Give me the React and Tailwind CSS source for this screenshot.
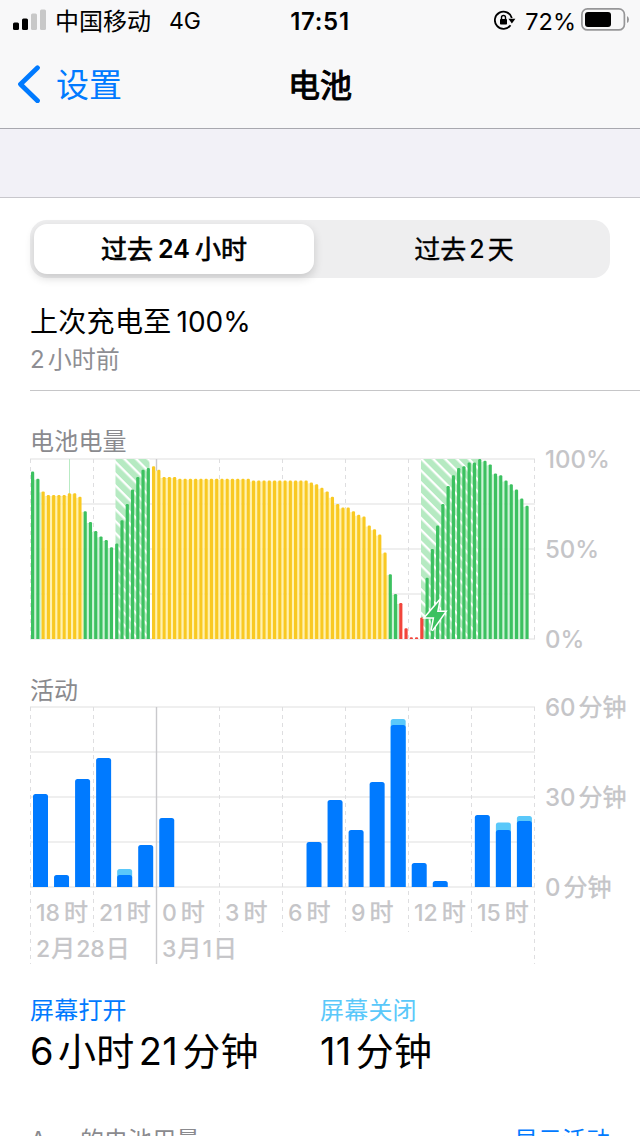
import React from 'react';

const levels = [
  93, 89, 82, 80, 80, 80, 80, 81, 81, 79, 71, 65, 60, 57, 55, 51,
  53, 66, 75, 83, 90, 94, 95, 96, 94, 90, 90, 90, 89, 89, 89, 89,
  89, 89, 89, 89, 89, 89, 89, 89, 89, 89, 88, 88, 88, 88, 88, 88,
  88, 88, 88, 88, 88, 87, 86, 84, 82, 79, 75, 73, 73, 71, 69, 68,
  63, 61, 58, 48, 36, 25, 20, 6, 1, 1, 12, 34, 50, 63, 75, 85,
  91, 95, 96, 98, 98, 100, 99, 97, 92, 91, 88, 86, 83, 78, 74,
];

const GREEN = { bar: '#3cc160', gap: '#cdf3d6' };
const YELLOW = { bar: '#f9c922', gap: '#fff2b0' };
const RED = { bar: '#f2453b', gap: '#ffffff' };

function levelColor(i) {
  if ((i >= 2 && i <= 9) || (i >= 23 && i <= 67)) return YELLOW;
  if (i >= 70 && i <= 74) return RED;
  return GREEN;
}

// minutes per hour slot: [screen on, total]
const activity = [
  [31, 31], [4, 4], [36, 36], [43, 43], [4, 6], [14, 14], [23, 23], [0, 0],
  [0, 0], [0, 0], [0, 0], [0, 0], [0, 0], [15, 15], [29, 29], [19, 19],
  [35, 35], [54, 56], [8, 8], [2, 2], [0, 0], [24, 24], [19, 21.5], [22, 23.7],
];

const hours = ['18', '21', '0', '3', '6', '9', '12', '15'];

function barPath(x, y, w, bottom, r) {
  const k = Math.min(r, bottom - y);
  return `M${x} ${bottom}V${y + k}q0 ${-k} ${k} ${-k}h${w - 2 * k}q${k} 0 ${k} ${k}V${bottom}z`;
}

// Chinese part of a medium-weight label
function Cn({ children }) {
  return <span className="font-normal [-webkit-text-stroke:0.4px_currentColor]">{children}</span>;
}

function Grid({ shortEnd, longEnd }) {
  return (
    <g>
      {[0, 45, 90, 135, 180].map((y) => (
        <rect key={y} x="0" y={y + 0.2} width="505" height="1.6" fill="#ebebec" />
      ))}
      {[0, 1, 3, 4, 5, 6, 7, 8].map((n) => (
        <line
          key={n}
          x1={n * 63 + 0.5}
          x2={n * 63 + 0.5}
          y1="1"
          y2={n === 0 || n === 8 ? longEnd : shortEnd}
          stroke="#dedee0"
          strokeDasharray="4 4"
        />
      ))}
      <rect x="125.8" y="1" width="1.4" height={longEnd - 1} fill="#c9c9cc" />
    </g>
  );
}

function BatteryChart() {
  return (
    <svg width="505" height="182" viewBox="0 0 505 182" className="block">
      <defs>
        <pattern id="hatch" width="8.4" height="8.4" patternUnits="userSpaceOnUse" patternTransform="rotate(45)">
          <rect width="8.4" height="8.4" fill="#b6eac2" />
          <rect width="8.4" height="2.3" fill="#fff" />
        </pattern>
      </defs>
      <Grid shortEnd={181} longEnd={181} />
      <rect x="39" y="1" width="1" height="180" fill="#b9ebc4" />
      {levels.map((v, i) => {
        if ((i >= 15 && i <= 22) || (i >= 74 && i <= 84) || i === 94) return null;
        const next = Math.min(v, levels[i + 1]);
        return (
          <rect key={i} x={4 + i * 5.26} y={182 - next * 1.8} width="2.26" height={next * 1.8 - 1} fill={levelColor(i).gap} />
        );
      })}
      <rect x="85.5" y="1" width="34" height="180" fill="url(#hatch)" />
      <rect x="391" y="1" width="57" height="180" fill="url(#hatch)" />
      {levels.map((v, i) => (
        <path key={i} d={barPath(1 + i * 5.26, 181 - v * 1.8, 3.2, 181, 1.2)} fill={levelColor(i).bar} />
      ))}
      <path
        d="M409 143.5L395.5 159.2H404.3L401.8 172.5L414.8 154H407z"
        fill="#3cc160"
        stroke="#fff"
        strokeWidth="3"
        paintOrder="stroke"
      />
    </svg>
  );
}

function ActivityChart() {
  return (
    <svg width="505" height="258" viewBox="0 0 505 258" className="col-start-1 row-start-1 block">
      <Grid shortEnd={226} longEnd={258} />
      {activity.map(([on, total], i) => {
        const x = 3 + i * 21.04;
        return (
          <g key={i}>
            {total > on && <path d={barPath(x, 181 - total * 3, 15, 181, 2.5)} fill="#5ac8fa" />}
            {on > 0 && <path d={barPath(x, 181 - on * 3, 15, 181, 2.5)} fill="#007aff" />}
          </g>
        );
      })}
    </svg>
  );
}

function StatusBar() {
  return (
    <div className="grid h-10 grid-cols-3 items-center text-2xl">
      <div className="flex items-center pl-[13px]">
        <svg width="33" height="22" viewBox="0 0 33 22">
          <rect x="0" y="13.5" width="6" height="7.5" rx="1.5" />
          <rect x="9" y="9.5" width="6" height="11.5" rx="1.5" />
          <rect x="18" y="4.5" width="6" height="16.5" rx="1.5" fill="#c8c8c8" />
          <rect x="27" y="0.5" width="6" height="20.5" rx="1.5" fill="#c8c8c8" />
        </svg>
        <span className="ml-[9px] whitespace-nowrap pt-[3px]">中国移动</span>
        <span className="ml-[18px] pt-[3px] text-[23px]">4G</span>
      </div>
      <div className="pt-[3px] text-center font-semibold tracking-[0.7px]">17:51</div>
      <div className="flex items-center justify-end pr-[11px]">
        <svg width="22" height="20" viewBox="0 0 22 20" fill="none" stroke="#000" strokeWidth="1.8">
          <path d="M17.8 8A8.6 8.6 0 1 0 16.5 15.2" />
          <path d="M14.4 8.8h7l-3.5 4.6z" fill="#000" stroke="none" />
          <rect x="6" y="9" width="7" height="5.5" rx="0.8" fill="#000" stroke="none" />
          <path d="M7.5 9.5V7.5a2 2 0 0 1 4 0v2" strokeWidth="1.4" />
        </svg>
        <span className="ml-[9px] mr-[5px] pt-[3px] text-[23.5px]">72%</span>
        <svg width="48" height="24" viewBox="0 0 48 24">
          <rect x="0.9" y="0.9" width="42.5" height="21" rx="5.5" fill="none" stroke="#969698" strokeWidth="1.7" />
          <rect x="4" y="4" width="26" height="15" rx="3" />
          <path d="M46 8q2 1 2 3.5t-2 3.5z" fill="#969698" />
        </svg>
      </div>
    </div>
  );
}

export default function App() {
  return (
    <div className="flex h-[1136px] w-[640px] flex-col overflow-hidden bg-white font-['Inter','Noto_Sans_CJK_SC',sans-serif] text-black">
      <header className="h-[129px] shrink-0 border-b border-[#a8a8af] bg-[#f8f8f9]">
        <StatusBar />
        <div className="grid h-[88px] grid-cols-3 items-center text-[33px]">
          <button type="button" className="flex items-center pl-[17px] text-[#007aff]">
            <svg width="24" height="38" viewBox="0 0 24 38" fill="none" stroke="currentColor" strokeWidth="4.8" strokeLinecap="round" strokeLinejoin="round">
              <path d="M20.5 2.8L3.5 19.2L20.5 35.8" />
            </svg>
            <span className="ml-[15px] pt-[3px]">设置</span>
          </button>
          <h1 className="pt-[3px] text-center text-[32px] font-normal [-webkit-text-stroke:1px_currentColor]">电池</h1>
        </div>
      </header>
      <div className="h-[69px] shrink-0 border-b border-[#c8c7cc] bg-[#f2f1f7]" />

      <main className="flex flex-col pl-[30px]">
        <div className="mt-[22px] grid h-[58px] w-[580px] grid-cols-2 rounded-[17px] bg-[#eeeeef] p-1 text-[26px]">
          <button type="button" className="mr-[6px] flex items-center justify-center gap-[5px] rounded-[13px] bg-white pt-px font-semibold shadow-[0_4px_10px_rgba(0,0,0,0.16)]">
            <span className="font-normal [-webkit-text-stroke:0.7px_currentColor]">过去</span>
            <span className="text-[25px]">24</span>
            <span className="font-normal [-webkit-text-stroke:0.7px_currentColor]">小时</span>
          </button>
          <button type="button" className="flex items-center justify-center gap-[3px] pl-[2px] pt-px font-medium">
            <Cn>过去</Cn><span className="text-[25px]">2</span><Cn>天</Cn>
          </button>
        </div>

        <section className="h-[113px] border-b border-[#c6c6c8] pt-[24px]">
          <p className="flex h-10 items-center gap-[5px] text-[28px]"><span className="tracking-[0.3px]">上次充电至</span><span>100%</span></p>
          <p className="flex h-[34px] items-center gap-[3px] pt-px text-2xl text-[#8e8e93]"><span>2</span><span>小时前</span></p>
        </section>

        <section className="mt-[34px]">
          <h2 className="flex h-[33px] items-center pt-px text-2xl tracking-[0.2px] text-[#8a8a8e]">电池电量</h2>
          <div className="flex h-[182px]">
            <BatteryChart />
            <div className="-mb-[14px] -mt-[12px] ml-[10px] flex flex-col justify-between text-2xl font-medium leading-[28px] text-[#c5c5c8]">
              <span>100%</span>
              <span>50%</span>
              <span>0%</span>
            </div>
          </div>
        </section>

        <section className="mt-[33px]">
          <h2 className="flex h-[33px] items-center pt-[2px] text-2xl text-[#8a8a8e]">活动</h2>
          <div className="flex h-[258px]">
            <div className="grid w-[505px]">
              <ActivityChart />
              <div className="col-start-1 row-start-1 pt-[189px] text-2xl font-medium text-[#c5c5c8]">
                <div className="grid w-[504px] grid-cols-8">
                  {hours.map((hour) => (
                    <div key={hour} className="flex h-9 items-center gap-1 whitespace-nowrap pl-[6px]">
                      <span className="text-[23px]">{hour}</span><Cn>时</Cn>
                    </div>
                  ))}
                </div>
                <div className="grid w-[504px] grid-cols-[126px_1fr]">
                  <div className="flex h-9 items-center gap-px pl-[6px]">
                    <span className="text-[23px]">2</span><Cn>月</Cn><span className="text-[23px]">28</span><Cn>日</Cn>
                  </div>
                  <div className="flex h-9 items-center gap-px pl-[6px]">
                    <span className="text-[23px]">3</span><Cn>月</Cn><span className="text-[23px]">1</span><Cn>日</Cn>
                  </div>
                </div>
              </div>
            </div>
            <div className="-mt-[12px] ml-[10px] flex h-[208px] flex-col justify-between whitespace-nowrap text-2xl font-medium leading-[28px] text-[#c5c5c8]">
              {[60, 30, 0].map((n) => (
                <div key={n} className="flex gap-[3px]"><span>{n}</span><Cn>分钟</Cn></div>
              ))}
            </div>
          </div>
        </section>

        <section className="mt-[29px] grid w-[580px] grid-cols-2">
          <div>
            <div className="flex h-[34px] items-center pt-px text-2xl tracking-[0.2px] text-[#007aff]">屏幕打开</div>
            <div className="flex h-[48px] items-center gap-1 text-[38px] tracking-[0.4px]"><span>6</span><span>小时</span><span>21</span><span>分钟</span></div>
          </div>
          <div>
            <div className="flex h-[34px] items-center pt-px text-2xl tracking-[0.2px] text-[#5ac8fa]">屏幕关闭</div>
            <div className="flex h-[48px] items-center gap-1 text-[38px] tracking-[0.4px]"><span>11</span><span>分钟</span></div>
          </div>
        </section>

        <div className="mt-[49px] flex h-[34px] w-[580px] items-center justify-between text-2xl">
          <span className="flex gap-1 text-[#8a8a8e]"><span>App</span><span>的电池用量</span></span>
          <span className="text-[#007aff]">显示活动</span>
        </div>
      </main>
    </div>
  );
}
